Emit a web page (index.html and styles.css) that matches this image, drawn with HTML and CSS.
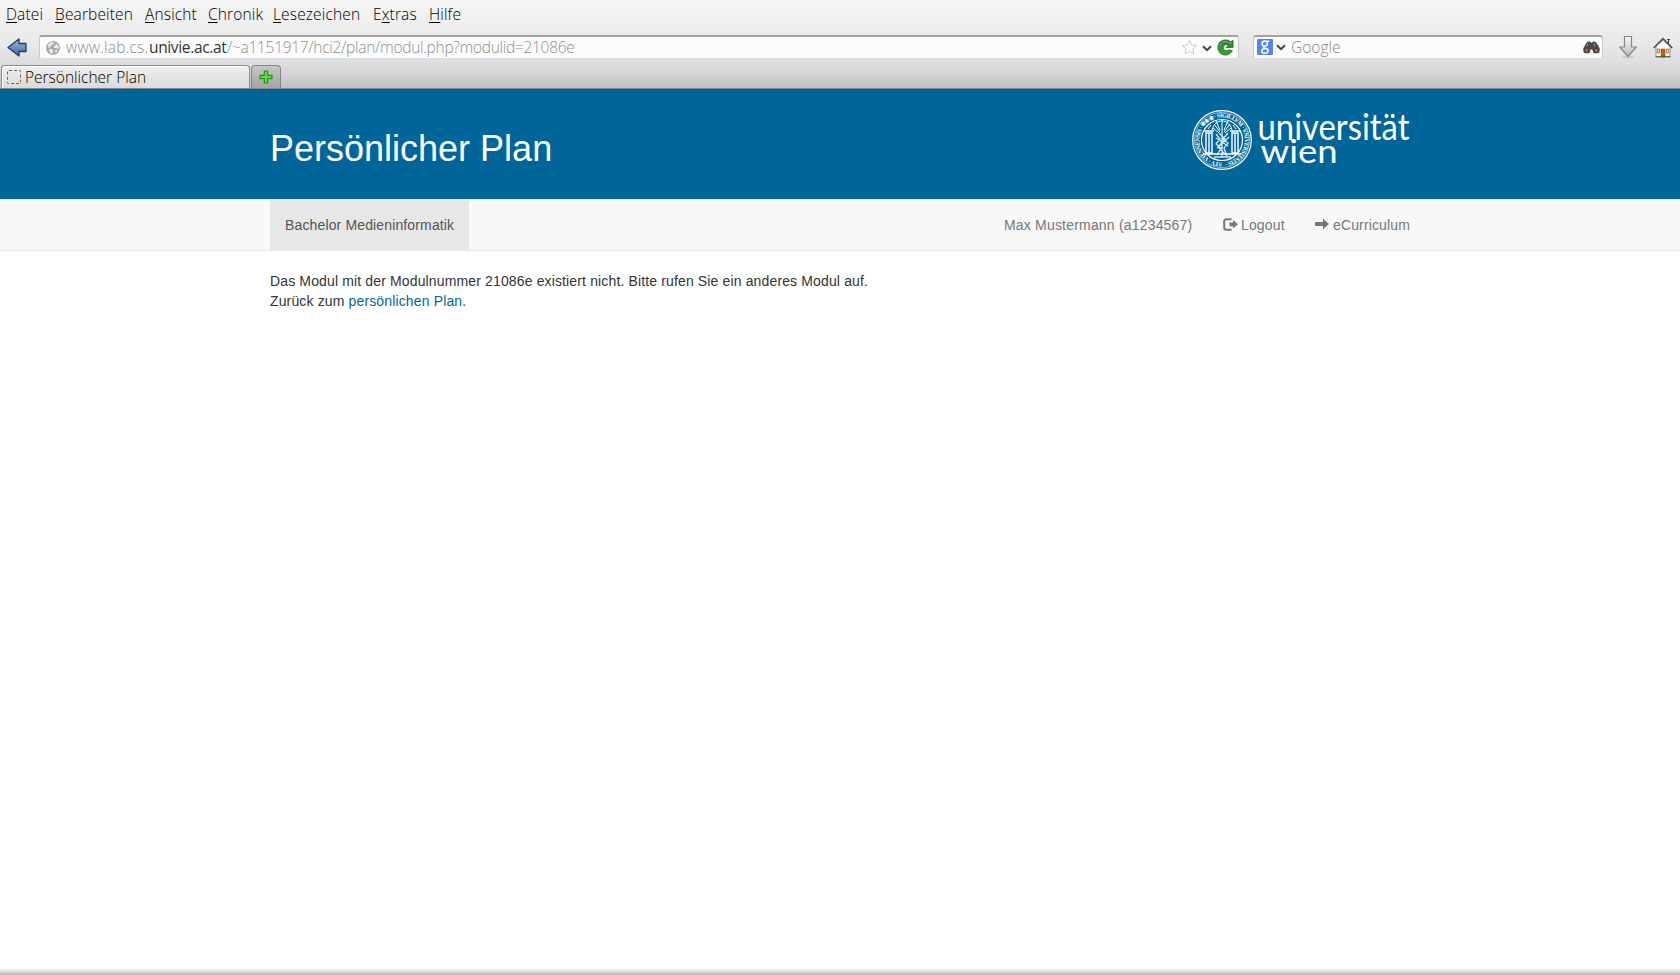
FILE: index.html
```html
<!DOCTYPE html>
<html lang="de">
<head>
<meta charset="utf-8">
<title>Persönlicher Plan</title>
<link rel="stylesheet" href="styles.css">
</head>
<body>
<div class="chrome">
  <div class="menubar">
    <span class="m1"><u>D</u>atei</span><span class="m2"><u>B</u>earbeiten</span><span class="m3"><u>A</u>nsicht</span><span class="m4"><u>C</u>hronik</span><span class="m5"><u>L</u>esezeichen</span><span class="m6">E<u>x</u>tras</span><span class="m7"><u>H</u>ilfe</span>
  </div>
  <div class="toolbar">
    <svg class="back" width="20" height="19" viewBox="0 0 20 19"><defs><linearGradient id="bl" x2="0" y2="1"><stop offset="0" stop-color="#9db9dc"/><stop offset="1" stop-color="#3f66a5"/></linearGradient></defs><path d="M1 9.500 12 1v4.500h7v8h-7V18z" fill="url(#bl)" stroke="#1f3c68" stroke-width="1.300" stroke-linejoin="round"/></svg>
    <div class="field url">
      <svg class="globe" width="14" height="14" viewBox="0 0 14 14"><circle cx="7" cy="7" r="7" fill="#a9a9a9"/><path d="M2 3.500 5 1l3 .5-1 2-2 .5-.5 2-2 1zM8 5l3-2 2 3-1 2-2-1-2 0zM3 8l3 0 1.500 2L6 13 4 12zM9 9l3 0-2 3-1-1z" fill="#e9e9e9"/></svg>
      <span class="addr"><span class="sub">www.lab.cs.</span><span class="host">univie.ac.at</span><span class="path">/~a1151917/hci2/plan/modul.php?modulid=21086e</span></span>
      <svg class="star" width="17" height="17" viewBox="0 0 17 17"><path d="m8.500 1.300 2.100 4.600 5 .6-3.700 3.400 1 5-4.400-2.500-4.400 2.500 1-5L1.400 6.500l5-.6z" fill="#fcfcfc" stroke="#ccc" stroke-linejoin="round"/></svg>
      <svg class="chev" width="10" height="7" viewBox="0 0 10 7"><path d="m1 1.200 4 4 4-4" fill="none" stroke="#444" stroke-width="2"/></svg>
      <svg class="reload" width="17" height="17" viewBox="0 0 18 18"><defs><linearGradient id="gr" x2="0" y2="1"><stop offset="0" stop-color="#2d7a35"/><stop offset="1" stop-color="#35ad28"/></linearGradient></defs><path d="M14.500 3 17 1.500V9H9.700l2.300-2.300C10 5.300 6.600 6 6.600 9c0 3.500 4 4.500 6 2.300l3.700 1.200C14 16 11.500 17 9 17 4 17 1 13.500 1 9s3-8 8-8c2.500 0 4.500 1 5.500 2z" fill="url(#gr)" stroke="#1c6420" stroke-width=".8"/><path d="M3 8C4 2.500 10 1.500 13.500 4.700L15.500 4" fill="none" stroke="#8fc08c" stroke-width="1"/></svg>
    </div>
    <div class="field search">
      <svg width="16" height="16" viewBox="0 0 16 16"><rect width="16" height="16" rx="1" fill="#5384f4"/><g fill="none" stroke="#fff" stroke-width="1.500"><ellipse cx="7.700" cy="4.600" rx="2.600" ry="2.700"/><path d="M9.500 2.600 12.300 2M8 7.400c-2 .8-1.500 1.500 0 1.800 5 1 3.300 5 0 5-4.500 0-4.500-4 0-4.500"/></g></svg>
      <svg class="chev2" width="10" height="7" viewBox="0 0 10 7"><path d="m1 1.200 4 4 4-4" fill="none" stroke="#444" stroke-width="2"/></svg>
      <span class="google">Google</span>
      <svg class="bino" width="17" height="13" viewBox="0 0 17 13"><path d="M4 1.500 6.500.7 8 2h1L10.500.7l2.500.8 3.300 6-.3 4-5 .5-1.500-4h-2L6 12 1 11.500.6 7.500z" fill="#4b4b4b" stroke="#2b2b2b" stroke-width=".6"/><circle cx="3.700" cy="9.300" r="2.300" fill="#9a6544" stroke="#4c3b33"/><circle cx="13.300" cy="9.300" r="2.300" fill="#9a6544" stroke="#4c3b33"/><path d="m5 2.500-1.500 3M11 2.500l1 3" stroke="#999"/></svg>
    </div>
    <svg class="down" width="20" height="24" viewBox="0 0 20 24"><defs><linearGradient id="dn" x2="0" y2="1"><stop offset="0" stop-color="#f7f7f7"/><stop offset="1" stop-color="#b3bfc2"/></linearGradient></defs><ellipse cx="10" cy="22" rx="7" ry="1.500" fill="#bdbdbd" opacity=".6"/><path d="M6.500 1.500h7V12h4.700L10 21.500 1.800 12h4.700z" fill="url(#dn)" stroke="#858a88" stroke-width="1.200"/></svg>
    <svg class="home" width="20" height="21" viewBox="0 0 20 21"><path d="M3 9.500 10 3l7 6.500V20H3z" fill="#fff" stroke="#777" stroke-width=".8"/><path d="M14 2.500h3M15.500 2.500v4" stroke="#444" stroke-width="1.200"/><path d="M.7 11 10 1.500l9.300 9.500" fill="none" stroke="#4c4c4c" stroke-width="1.500"/><path d="M8 12h4v8H8z" fill="#c65a0b" stroke="#7d3b08" stroke-width=".5"/><path d="M4.300 12h2.200v4H4.300zM13.500 12h2.200v4h-2.200z" fill="#f2dcae" stroke="#98662d" stroke-width=".8"/><path d="M2.500 19.700h5.500M12 19.700h5.500" stroke="#555"/><path d="M8 19.500h4" stroke="#277817" stroke-width="1.500"/></svg>
  </div>
  <div class="tabs">
    <div class="tab"><i class="blank"></i><span>Persönlicher Plan</span></div>
    <div class="newtab"><svg width="14" height="14" viewBox="0 0 14 14"><path d="M5.300 1h3.400v4.300H13v3.400H8.700V13H5.300V8.700H1V5.300h4.300z" fill="#62d83e" stroke="#209519" stroke-width="1.200" stroke-linejoin="round"/></svg></div>
  </div>
</div>
<header class="header">
  <div class="container head-row">
    <h1>Persönlicher Plan</h1>
    <svg class="logo" width="220" height="68" viewBox="0 0 220 68">
      <g fill="none" stroke="#fff">
        <circle cx="31" cy="31" r="29.300" stroke-width="1.200"/>
        <circle cx="31" cy="31" r="27.500" stroke-width=".7" opacity=".8"/>
        <circle cx="31" cy="31" r="20.500" stroke-width="1.200"/>
        <g transform="translate(1)">
        <path d="M14 24h6v20h-6zM40 24h6v20h-6zM12 22h10M38 22h10M11 45h38M17 24v20M43 24v20" stroke-width="1.400"/>
        <path d="M20 21c3-12 17-12 20 0M30 11v12M22 15l6 8M38 15l-6 8M24 12l4 9M36 12l-4 9M21 19l6 5M39 19l-6 5M16 20l3-4M44 20l-3-4" stroke-width="1"/>
        <path d="m24 25 4 5-4 5 5 4-4 7M36 24l-5 6 5 4-4 5 3 8M24 29l12 8M37 28l-12 11M30 23v25M22 48h17M27 24l6 6-7 8 8 8" stroke-width="1.300" opacity=".85"/>
        </g>
      </g>
      <defs><path id="ring" d="M31 53.700a22.700 22.700 0 1 1 .1 0"/></defs>
      <text class="ring"><textPath href="#ring" textLength="139">STV · VIENNENSIS · ❀❀❀ · SIGILLVM · VNIVERSITATIS ·</textPath></text>
      <text class="word" x="66.500" y="30.500" textLength="152" lengthAdjust="spacingAndGlyphs">universität</text>
      <text class="word lower" x="69.500" y="53.500" textLength="77" lengthAdjust="spacingAndGlyphs">wien</text>
    </svg>
  </div>
</header>
<nav class="nav">
  <div class="container nav-row">
    <a class="active">Bachelor Medieninformatik</a>
    <div class="right">
      <span class="user">Max Mustermann (a1234567)</span>
      <span class="logout"><svg width="15" height="13" viewBox="0 0 15 13"><path d="M8.500 1.200H3.500A2.300 2.300 0 0 0 1.200 3.500v6a2.300 2.300 0 0 0 2.300 2.300h5" fill="none" stroke="#777" stroke-width="2"/><path d="M6.500 4.500H10V2l5 4.300-5 4.300V8.200H6.500z" fill="#777"/></svg><span>Logout</span></span>
      <span class="ecur"><svg width="14" height="12" viewBox="0 0 14 12"><path d="M0 4h8V.7L14 6 8 11.300V8H0z" fill="#777"/></svg><span>eCurriculum</span></span>
    </div>
  </div>
</nav>
<main class="container content">
  <p class="l1">Das Modul mit der Modulnummer 21086e existiert nicht. Bitte rufen Sie ein anderes Modul auf.</p>
  <p class="l2">Zurück zum <a>persönlichen Plan</a>.</p>
</main>
<footer class="edge"></footer>
</body>
</html>
```
FILE: styles.css
```css
* { box-sizing: border-box; }
body { margin: 0; height: 975px; display: flex; flex-direction: column; overflow: hidden; background: #fff; font: 14px/20px "Liberation Sans", Arial, sans-serif; color: #333; }
h1, p { margin: 0; font-weight: 400; }
svg { display: block; flex: none; }
.chrome { height: 89px; flex: none; border-bottom: 1px solid #858585; background: linear-gradient(#f5f5f5, #e8e8e9 45px, #d9d9db 70px, #bfbfc1); font: 300 15.500px/20px "Open Sans", "Noto Sans", sans-serif; color: #000; white-space: nowrap; }
.menubar { display: flex; height: 35px; padding: 4px 0 0 6px; }
.menubar u { text-decoration-thickness: 1px; text-underline-offset: 2px; }
.menubar span { flex: none; letter-spacing: .15px; }
.m1 { width: 49px; } .m2 { width: 90px; } .m3 { width: 63px; } .m4 { width: 65px; } .m5 { width: 100px; } .m6 { width: 56px; } .m7 { width: 50px; }
.toolbar { display: flex; height: 24px; align-items: center; padding-left: 7px; }
.back { margin-right: 12px; }
.field { height: 24px; display: flex; align-items: center; border: 1px solid #c9c9c9; border-top: 2px solid #a2a2a2; border-bottom-color: #dedede; border-radius: 3px; background: #fcfcfc; color: #8f8f8f; }
.field span { line-height: 18px; padding-bottom: 1px; }
.url { width: 1200px; padding: 0 4px 0 6px; }
.addr { margin-left: 6px; flex: 1; display: flex; }
.field .addr { padding: 0; }
.sub { width: 83px; letter-spacing: .2px; }
.host { width: 78px; color: #333; font-weight: 400; letter-spacing: -.35px; }
.path { letter-spacing: -.29px; }
.chev { margin: 1px 5px 0 4px; }
.search { width: 350px; margin-left: 14px; padding: 0 2px 0 3px; }
.search > svg:first-child { margin-top: -1px; }
.chev2 { margin-left: 3px; }
.google { margin-left: 5px; flex: 1; color: #888; }
.down { margin-left: 15px; }
.home { margin-left: 15px; }
.tabs { display: flex; height: 29px; padding: 6px 0 0 1px; }
.tab { width: 249px; height: 23px; display: flex; align-items: center; padding: 0 0 0 5px; border: 1px solid #8c8c8c; border-bottom: 0; border-radius: 4px 4px 0 0; background: linear-gradient(#f0f0f0, #dadada); box-shadow: inset 1px 1px #fff; }
.blank { width: 14px; height: 14px; border: 1px dashed #666; border-radius: 2px; margin-right: 4px; }
.newtab { width: 30px; height: 23px; margin-left: 1px; display: grid; place-items: center; border: 1px solid #858585; border-bottom: 0; border-radius: 4px 4px 0 0; background: linear-gradient(#c6c6c6, #a4a4a4); }
.container { width: 1140px; margin: 0 auto; }
.header { height: 110px; background: #069; flex: none; }
.head-row { display: flex; justify-content: space-between; }
h1 { color: #fff; font-size: 36px; line-height: 40px; padding-top: 40px; }
.logo { margin: 20px -1px 0 0; overflow: visible; }
.word { font-family: Lato, sans-serif; font-size: 36px; fill: #fff; }
.lower { font-size: 32px; }
.ring { font: 700 6px "Liberation Serif", serif; fill: #fff; }
.nav { height: 52px; flex: none; background: #f8f8f8; border: solid #e7e7e7; border-width: 1px 0; color: #777; letter-spacing: .14px; }
.nav-row { display: flex; justify-content: space-between; }
.active { width: 199px; height: 50px; padding: 15px; background: #e7e7e7; color: #555; white-space: nowrap; }
.right { display: flex; padding-top: 15px; white-space: nowrap; }
.user { width: 219px; letter-spacing: .19px; }
.logout { width: 92px; display: flex; gap: 3px; }
.ecur { width: 95px; display: flex; gap: 4px; }
.logout svg, .ecur svg { margin-top: 3px; }
.content { padding-top: 20px; flex: 1; white-space: nowrap; letter-spacing: .14px; }
.content a { color: #069; }
.edge { height: 7px; background: linear-gradient(#fff, #b8b8b8); }
```
